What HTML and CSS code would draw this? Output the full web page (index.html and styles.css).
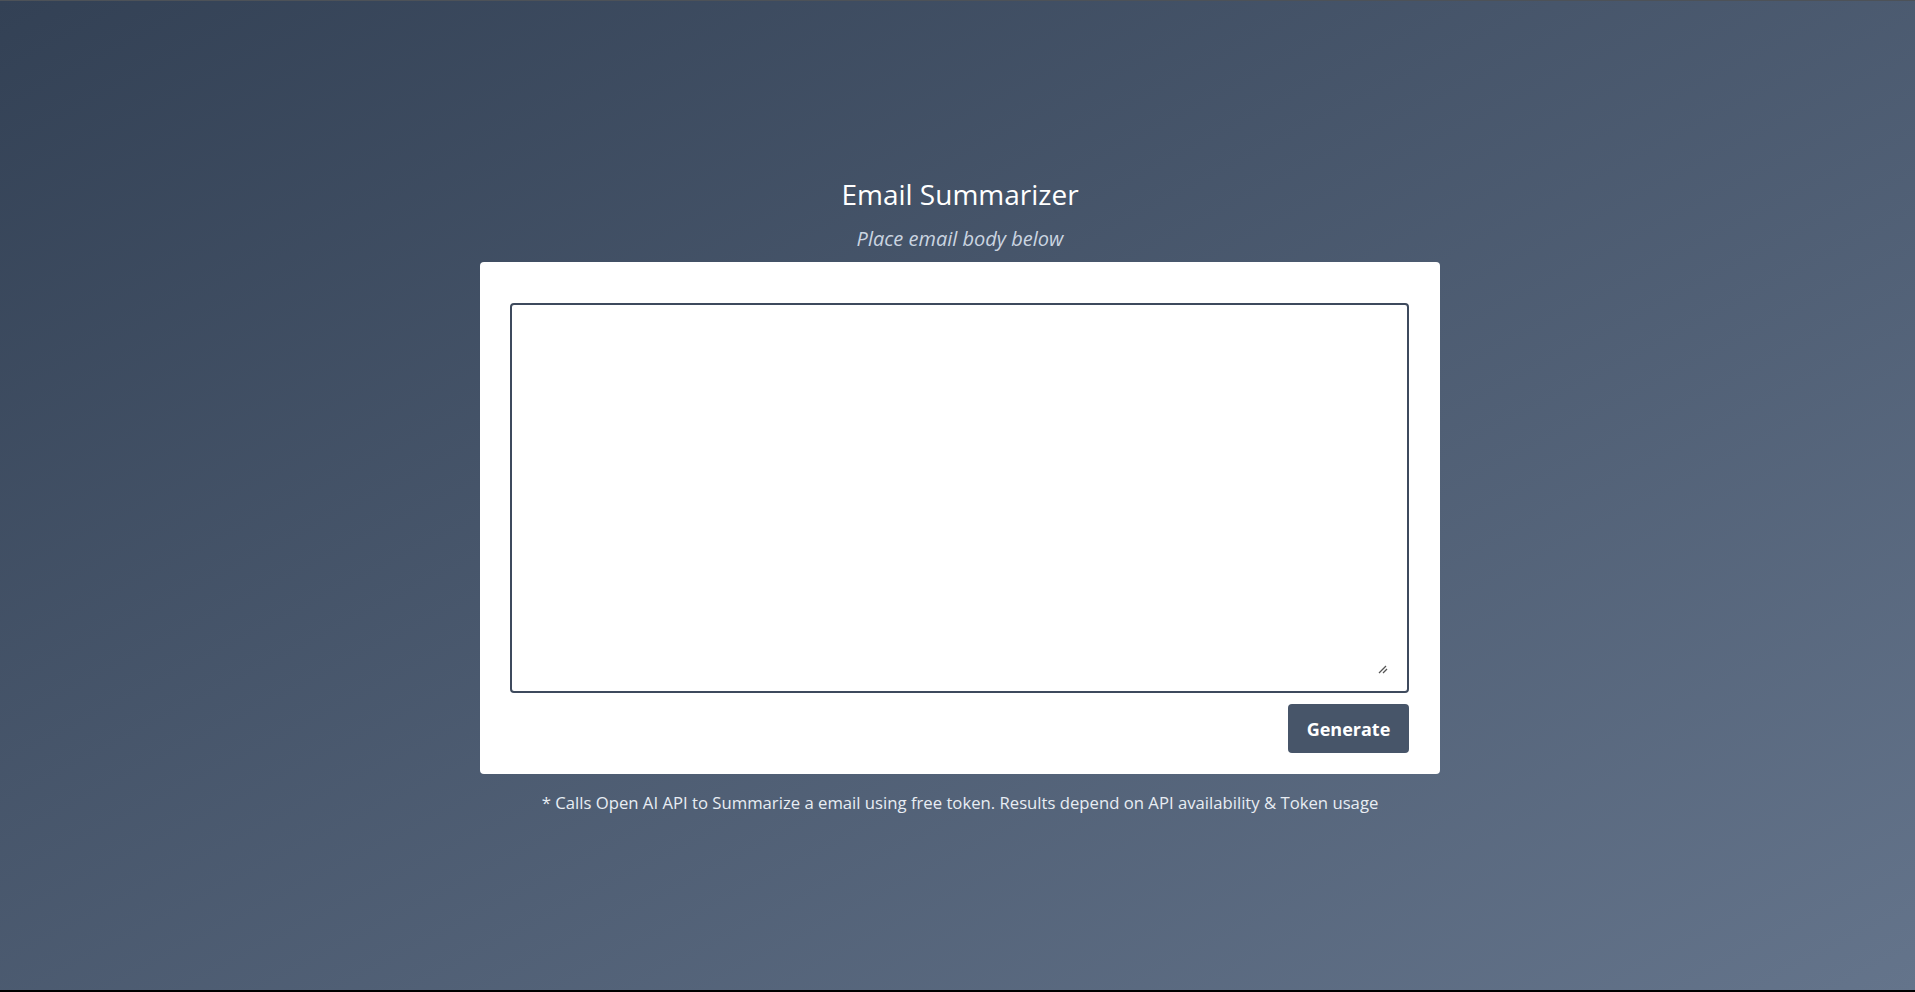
FILE: index.html
```html
<!DOCTYPE html>
<html lang="en">
<head>
<meta charset="utf-8">
<title>Email Summarizer</title>
<link rel="stylesheet" href="styles.css">
</head>
<body>
<main class="page">
  <h1 class="title">Email Summarizer</h1>
  <p class="subtitle">Place email body below</p>
  <form class="card">
    <div class="input-wrap">
      <textarea class="email-input"></textarea>
      <svg class="resizer" width="10" height="9" viewBox="0 0 10 9" aria-hidden="true">
        <path d="M1 8 L8 1 M5 8 L9 4" stroke="#555" stroke-width="1.3" fill="none"/>
      </svg>
    </div>
    <div class="actions">
      <button type="button" class="generate">Generate</button>
    </div>
  </form>
  <p class="note">* Calls Open AI API to Summarize a email using free token. Results depend on API availability &amp; Token usage</p>
</main>
</body>
</html>
```
FILE: styles.css
```css
* { box-sizing: border-box; }
html, body { margin: 0; height: 100%; }
body {
  font-family: "Open Sans", "Noto Sans", sans-serif;
  background: #000;
}
.page {
  height: 992px;
  border-top: 1px solid #4d5258;
  border-bottom: 2px solid #000;
  background: linear-gradient(to bottom right, #334155, #64748b);
  display: flex;
  flex-direction: column;
  align-items: center;
  justify-content: center;
  padding: 0 0 2px 5px;
}
.title {
  margin: 0;
  font-weight: 400;
  font-size: 28px;
  line-height: 40px;
  color: #ffffff;
}
.subtitle {
  margin: 12px 0 10px;
  font-style: italic;
  font-size: 20px;
  line-height: 26px;
  color: #cbd5e1;
}
.card {
  width: 960px;
  background: #fff;
  border-radius: 4px;
  padding: 41px 31px 21px 30px;
  display: flex;
  flex-direction: column;
}
.input-wrap {
  position: relative;
}
.email-input {
  display: block;
  width: 100%;
  height: 390px;
  border: 2px solid #3e4a5d;
  border-radius: 4px;
  resize: none;
  font-family: inherit;
  font-size: 16px;
  padding: 8px;
  outline: none;
}
.resizer {
  position: absolute;
  right: 21px;
  bottom: 19px;
}
.actions {
  display: flex;
  justify-content: flex-end;
  margin-top: 11px;
}
.generate {
  width: 121px;
  height: 49px;
  border: none;
  border-radius: 4px;
  background: #475569;
  color: #fff;
  font-family: inherit;
  font-weight: 700;
  font-size: 18px;
  cursor: pointer;
}
.note {
  margin: 17px 0 0;
  font-size: 16.7px;
  line-height: 24px;
  color: #e8edf3;
}
```
